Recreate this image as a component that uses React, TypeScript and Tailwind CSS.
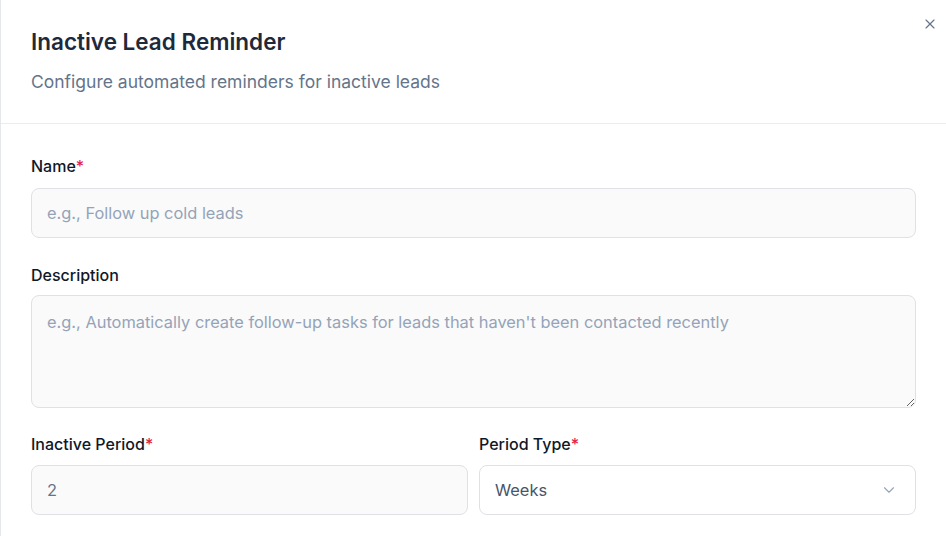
import { X, ChevronDown } from "lucide-react";

function Label({ text, required }: { text: string; required?: boolean }) {
  return (
    <label className="block text-[16px] font-medium leading-5 text-[#101828]">
      {text}
      {required && <span className="text-[#e11d48]">*</span>}
    </label>
  );
}

export default function App() {
  return (
    <div
      className="relative h-[536px] w-[946px] overflow-hidden border-l border-[#e5e7eb] bg-white"
      style={{ fontFamily: "Inter, 'Noto Sans', sans-serif" }}
    >
      <button className="absolute right-[8px] top-[16px] text-[#64748b]">
        <X size={16} strokeWidth={1.75} />
      </button>

      <div className="border-b border-[#ececec] px-[30px] pb-[29px] pt-[28px]">
        <h2 className="text-[22.5px] font-semibold leading-7 text-[#1e293b]">Inactive Lead Reminder</h2>
        <p className="mt-[14px] text-[17.5px] leading-6 text-[#64748b]">
          Configure automated reminders for inactive leads
        </p>
      </div>

      <div className="px-[30px] pt-[32px]">
        <Label text="Name" required />
        <input
          placeholder="e.g., Follow up cold leads"
          className="mt-[12px] h-[50px] w-full rounded-lg border border-[#dfe1e6] bg-[#fafafa] px-[15px] text-[16.4px] text-[#475569] placeholder:text-[#94a3b8] outline-none"
        />

        <div className="mt-[27px]">
          <Label text="Description" />
        </div>
        <textarea
          placeholder="e.g., Automatically create follow-up tasks for leads that haven't been contacted recently"
          className="mt-[10px] block h-[113px] w-full rounded-lg border border-[#dfe1e6] bg-[#fafafa] px-[15px] py-[14px] text-[16.4px] leading-6 text-[#475569] placeholder:text-[#94a3b8] outline-none"
        />

        <div className="mt-[26px] grid grid-cols-2 gap-[11px]">
          <div>
            <Label text="Inactive Period" required />
            <input
              defaultValue="2"
              className="mt-[11px] h-[50px] w-full rounded-lg border border-[#dfe1e6] bg-[#fafafa] px-[15px] text-[16.4px] text-[#64748b] outline-none"
            />
          </div>
          <div>
            <Label text="Period Type" required />
            <div className="mt-[11px] flex h-[50px] w-full items-center justify-between rounded-lg border border-[#dfe1e6] bg-white pl-[15px] pr-[17px] text-[16.4px] text-[#475569]">
              <span>Weeks</span>
              <ChevronDown size={18} strokeWidth={1.5} className="text-[#94a3b8]" />
            </div>
          </div>
        </div>
      </div>
    </div>
  );
}
